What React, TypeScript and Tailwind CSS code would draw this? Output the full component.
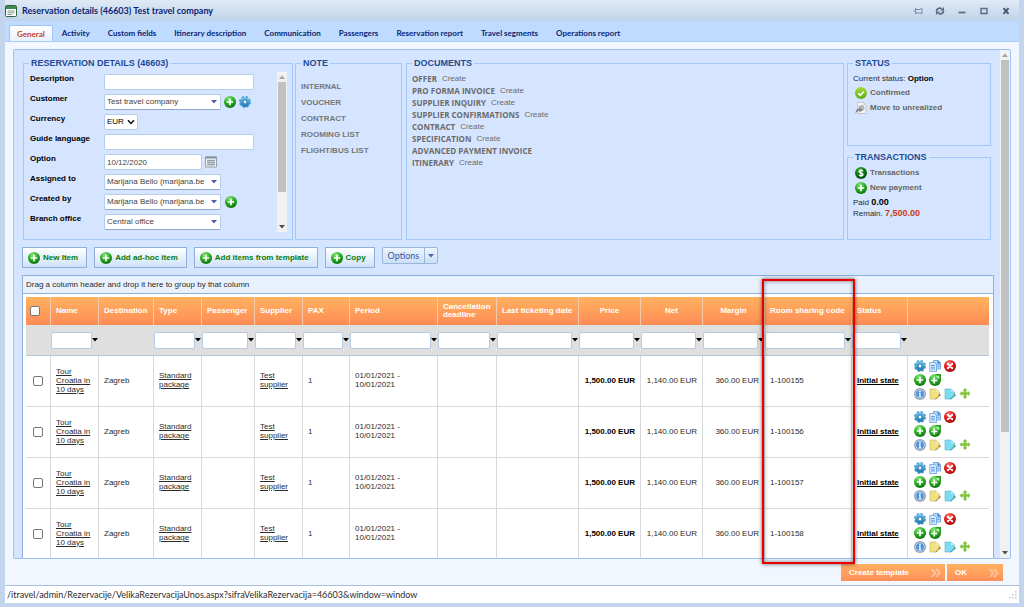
import type { ReactNode } from 'react';

const ARIAL = "font-['Liberation_Sans',Arial,sans-serif]";
const SEGOE = "font-['Open_Sans','Noto_Sans',sans-serif]";
const LATO = "font-['Lato','Open_Sans',sans-serif]";

const tabs = [
  'General',
  'Activity',
  'Custom fields',
  'Itinerary description',
  'Communication',
  'Passengers',
  'Reservation report',
  'Travel segments',
  'Operations report',
];

const notes = ['INTERNAL', 'VOUCHER', 'CONTRACT', 'ROOMING LIST', 'FLIGHT/BUS LIST'];

const documents = [
  { name: 'OFFER', create: true },
  { name: 'PRO FORMA INVOICE', create: true },
  { name: 'SUPPLIER INQUIRY', create: true },
  { name: 'SUPPLIER CONFIRMATIONS', create: true },
  { name: 'CONTRACT', create: true },
  { name: 'SPECIFICATION', create: true },
  { name: 'ADVANCED PAYMENT INVOICE', create: false },
  { name: 'ITINERARY', create: true },
];

const columns = [
  { label: 'Name', col: 'w-[48px]', filter: true, align: 'text-left' },
  { label: 'Destination', col: 'w-[55px]', filter: false, align: 'text-left' },
  { label: 'Type', col: 'w-[48px]', filter: true, align: 'text-left' },
  { label: 'Passenger', col: 'w-[53px]', filter: true, align: 'text-left' },
  { label: 'Supplier', col: 'w-[48px]', filter: true, align: 'text-left' },
  { label: 'PAX', col: 'w-[47px]', filter: true, align: 'text-left' },
  { label: 'Period', col: 'w-[88px]', filter: true, align: 'text-left' },
  { label: 'Cancellation deadline', col: 'w-[59px]', filter: true, align: 'text-left' },
  { label: 'Last ticketing date', col: 'w-[82px]', filter: true, align: 'text-left' },
  { label: 'Price', col: 'w-[62px]', filter: true, align: 'text-center' },
  { label: 'Net', col: 'w-[62px]', filter: true, align: 'text-center' },
  { label: 'Margin', col: 'w-[62px]', filter: true, align: 'text-center' },
  { label: 'Room sharing code', col: 'w-[87px]', filter: true, align: 'text-left' },
  { label: 'Status', col: 'w-[56px]', filter: true, align: 'text-left' },
];

const codes = ['1-100155', '1-100156', '1-100157', '1-100158'];

/* ---------- icons ---------- */

// gradients shared by all icons
function IconDefs() {
  return (
    <svg className="absolute size-0" aria-hidden="true">
      <defs>
        <radialGradient id="green" cx="0.4" cy="0.25" r="0.8">
          <stop offset="0" stopColor="#8be878" />
          <stop offset="0.5" stopColor="#2cae24" />
          <stop offset="1" stopColor="#0a6b0a" />
        </radialGradient>
        <radialGradient id="darkGreen" cx="0.4" cy="0.25" r="0.8">
          <stop offset="0" stopColor="#4fae48" />
          <stop offset="0.5" stopColor="#0b7a12" />
          <stop offset="1" stopColor="#03480a" />
        </radialGradient>
        <radialGradient id="red" cx="0.4" cy="0.25" r="0.8">
          <stop offset="0" stopColor="#f47a70" />
          <stop offset="0.5" stopColor="#dc1c1c" />
          <stop offset="1" stopColor="#a30808" />
        </radialGradient>
        <linearGradient id="blue" x1="0" y1="0" x2="0" y2="1">
          <stop offset="0" stopColor="#7cc6ea" />
          <stop offset="1" stopColor="#1673b0" />
        </linearGradient>
        <linearGradient id="lime" x1="0" y1="0" x2="0" y2="1">
          <stop offset="0" stopColor="#a3dc3a" />
          <stop offset="1" stopColor="#5fae12" />
        </linearGradient>
      </defs>
    </svg>
  );
}

function Icon({ children }: { children: ReactNode }) {
  return (
    <svg viewBox="0 0 24 24" className="size-3 shrink-0" aria-hidden="true">
      {children}
    </svg>
  );
}

const PlusIcon = () => (
  <Icon>
    <circle cx="12" cy="12" r="12" fill="url(#green)" />
    <path d="M12 5.5v13M5.5 12h13" stroke="#fff" strokeWidth="3.4" />
  </Icon>
);

const PlusCornerIcon = () => (
  <Icon>
    <circle cx="12" cy="12" r="12" fill="url(#green)" />
    <path d="M13 0h11v11z" fill="#27a31f" />
    <path d="M10.5 7v12M4.5 13h12" stroke="#fff" strokeWidth="3.2" />
    <path d="M14.5 4.5h5v5M19.5 4.5l-4 4" stroke="#e4ffe0" strokeWidth="1.8" fill="none" />
  </Icon>
);

const GearIcon = () => (
  <Icon>
    <circle cx="12" cy="12" r="10.2" fill="none" stroke="#4a9fd0" strokeWidth="3.6" strokeDasharray="4.8 3.21" />
    <circle cx="12" cy="12" r="9.8" fill="url(#blue)" />
    <circle cx="12" cy="12" r="4.8" fill="#2f84ba" />
    <circle cx="12" cy="12" r="2.8" fill="#f2faff" />
  </Icon>
);

const CopyIcon = () => (
  <Icon>
    <path d="M9 1h10l4 4v13H9z" fill="#b9d8f7" stroke="#5b9be0" strokeWidth="1.5" />
    <path d="M1.5 5H11l4 4v14H1.5z" fill="#dcebfc" stroke="#5b9be0" strokeWidth="1.5" />
    <path d="M4 11h8M4 14.5h8M4 18h8M17 9h4M17 13h4" stroke="#5797df" strokeWidth="1.8" />
    <path d="M17 1v6h6" fill="#2f74c8" />
  </Icon>
);

const DeleteIcon = () => (
  <Icon>
    <circle cx="12" cy="12" r="12" fill="url(#red)" />
    <path d="M7.5 7.5l9 9M16.5 7.5l-9 9" stroke="#fff" strokeWidth="3.6" strokeLinecap="round" />
  </Icon>
);

const InfoIcon = () => (
  <Icon>
    <circle cx="12" cy="12" r="12" fill="#93a3b5" />
    <circle cx="12" cy="12" r="8.8" fill="#4f93dc" stroke="#c3d3e4" strokeWidth="1.8" />
    <path d="M12 10.5v7M10 11h2.5M9.5 17.5h5" stroke="#fff" strokeWidth="2.4" />
    <circle cx="12" cy="7" r="1.9" fill="#fff" />
  </Icon>
);

function NoteIcon({ fill, edge, pencil }: { fill: string; edge: string; pencil: string }) {
  return (
    <Icon>
      <path d="M2 2h12l7 6v8l-7 6H2z" fill={fill} stroke={edge} strokeWidth="1.2" />
      <path d="M14 2v6h7" fill="#fff" fillOpacity="0.4" />
      <path d="M21 14.5L15.5 20" stroke={edge} strokeWidth="3.4" />
      <path d="M22.5 13l-2 2" stroke={pencil} strokeWidth="3.6" />
      <path d="M15 20.5l-2 2" stroke="#555" strokeWidth="2" />
    </Icon>
  );
}

const MoveIcon = () => (
  <Icon>
    <path d="M12 3v16M4 11h16" stroke="#84c441" strokeWidth="5" />
    <path d="M12 0l5 5H7zM12 22l-5-5h10zM1 11l5-5v10zM23 11l-5 5V6z" fill="#84c441" />
  </Icon>
);

const CheckIcon = () => (
  <Icon>
    <circle cx="12" cy="12" r="12" fill="url(#lime)" />
    <path d="M6.5 12.5l4 4 7-7.5" stroke="#fff" strokeWidth="3.4" fill="none" />
  </Icon>
);

const UnrealizedIcon = () => (
  <Icon>
    <path d="M5 1h12l5 5v17H5z" fill="#f4f4f4" stroke="#b4b4b4" strokeWidth="1.3" />
    <path d="M17 1v5h5" fill="#d0d0d0" />
    <circle cx="13" cy="12" r="6" fill="#b5b5b5" />
    <path d="M1 23c0-7 3-10 8-10v-3l6 6-6 5v-3c-3 0-5 1-8 5z" fill="#858585" />
  </Icon>
);

const DollarIcon = () => (
  <Icon>
    <circle cx="12" cy="12" r="12" fill="url(#darkGreen)" />
    <path
      d="M16 8.5c-1-1.5-2.3-2-4-2-2.3 0-3.8 1-3.8 2.7 0 4 8 1.8 8 5.8 0 1.7-1.6 2.7-4.2 2.7-2 0-3.4-.7-4.3-2.2M12 4v16"
      stroke="#fff"
      strokeWidth="2.4"
      fill="none"
    />
  </Icon>
);

const CalendarIcon = () => (
  <Icon>
    <path d="M1 2h22v20H1z" fill="#f3f5f7" stroke="#7d8a97" strokeWidth="1.6" />
    <path d="M1 1h22v4H1z" fill="#8593a1" />
    <path d="M4 9h16M4 13h16M4 17h16M6 7v13M10 7v13M14 7v13M18 7v13" stroke="#76838f" strokeWidth="1.3" />
  </Icon>
);

const FormIcon = () => (
  <Icon>
    <rect x="1" y="1" width="22" height="22" rx="2" fill="#fff" stroke="#2f6340" strokeWidth="2" />
    <path d="M2 2h20v6H2z" fill="#3f8a52" />
    <path d="M5 12h14M5 15.5h14M5 19h9" stroke="#6d9878" strokeWidth="1.8" />
  </Icon>
);

function Caret({ className }: { className: string }) {
  return (
    <svg viewBox="0 0 6 4" className={`h-1 w-1.5 shrink-0 ${className}`} aria-hidden="true">
      <path d="M0 0h6L3 3.5z" fill="currentColor" />
    </svg>
  );
}

const Chevrons = () => (
  <svg viewBox="0 0 20 16" className="h-2 w-2.5 opacity-80" fill="none" stroke="#fff" strokeWidth="1.2" aria-hidden="true">
    <path d="M1 1h3l6 7-6 7H1l6-7zM10 1h3l6 7-6 7h-3l6-7z" />
  </svg>
);

/* ---------- small parts ---------- */

function ScrollBar({ thumb }: { thumb: string }) {
  return (
    <div className="flex w-2.5 shrink-0 flex-col items-center bg-[#f1f1f1]" aria-hidden="true">
      <div className="flex h-2.5 items-center">
        <Caret className="rotate-180 text-[#a3a3a3]" />
      </div>
      <div className="flex w-full flex-1 flex-col items-center">
        <div className={`w-2 bg-[#c1c1c1] ${thumb}`} />
      </div>
      <div className="flex h-2.5 items-center">
        <Caret className="text-[#505050]" />
      </div>
    </div>
  );
}

function Panel({ title, className, children }: { title: string; className: string; children: ReactNode }) {
  return (
    <fieldset className={`min-w-0 border border-[#a3c8fb] px-[5px] ${className}`}>
      <legend className="px-0.5 text-[9px] leading-3 font-bold text-[#1f4b94]">{title}</legend>
      {children}
    </fieldset>
  );
}

function Field({ id, label, children }: { id: string; label: string; children: ReactNode }) {
  return (
    <div className="flex h-5 items-start">
      <label htmlFor={id} className="w-[74px] shrink-0 pt-0.5 leading-[10px] font-bold text-black">
        {label}
      </label>
      <div className="flex items-center pt-0.5">{children}</div>
    </div>
  );
}

const box = 'h-4 rounded-xs border border-[#b4cdec] bg-white px-0.5 text-[#444]';

function Combo({ id, value }: { id: string; value: string }) {
  return (
    <div className="relative flex items-center">
      <select id={id} className={`${box} w-[117px] appearance-none border-b-[#8fa9d3] pr-3`}>
        <option>{value}</option>
      </select>
      <Caret className="pointer-events-none absolute right-1 text-[#4a5fae]" />
    </div>
  );
}

function IconButton({ label, children }: { label: string; children: ReactNode }) {
  return (
    <button type="button" aria-label={label} className="block">
      {children}
    </button>
  );
}

function ToolButton({ children }: { children: ReactNode }) {
  return (
    <button
      type="button"
      className="flex h-[21px] items-center gap-[3px] border border-[#8fb0dd] bg-linear-to-b from-white to-[#cfe2fa] pr-2 pl-[5px] font-bold text-[#0a7a0a]"
    >
      <PlusIcon />
      {children}
    </button>
  );
}

function ActionLink({ icon, children }: { icon: ReactNode; children: ReactNode }) {
  return (
    <a href="#" className="flex h-[15px] items-center gap-[3px] pl-0.5 font-bold text-[#666]">
      {icon}
      {children}
    </a>
  );
}

/* ---------- sections ---------- */

function TitleBar() {
  return (
    <header className="flex h-[21px] shrink-0 items-center justify-between bg-linear-to-b from-[#dfeaf6] to-[#c1d3ea] pt-px pr-2">
      <h1 className={`flex items-center gap-[5px] text-[9px] font-bold text-[#0a1f75] ${LATO}`}>
        <FormIcon />
        Reservation details (46603) Test travel company
      </h1>
      <div className="flex items-center gap-3 text-[#5b6c85]">
        <IconButton label="Pin">
          <svg viewBox="0 0 10 10" className="size-2.5" fill="none" stroke="currentColor">
            <path d="M0 5h2" opacity="0.5" />
            <path d="M2.5 2v6M9 2.5v5M2.5 3.5h4l2.5-1M2.5 7h4l2.5.5" opacity="0.7" />
          </svg>
        </IconButton>
        <IconButton label="Reload">
          <svg viewBox="0 0 10 10" className="size-2.5" fill="none" stroke="currentColor" strokeWidth="1.8">
            <path d="M1.5 5.5a3.2 3.2 0 0 1 5-2.8M8.5 4.5a3.2 3.2 0 0 1-5 2.8" />
            <path d="M5 4.5h4V1zM5 5.5H1V9z" fill="currentColor" stroke="none" />
          </svg>
        </IconButton>
        <IconButton label="Minimize">
          <svg viewBox="0 0 10 10" className="size-2.5" stroke="currentColor" strokeWidth="1.8">
            <path d="M1.5 6.5h7" />
          </svg>
        </IconButton>
        <IconButton label="Maximize">
          <svg viewBox="0 0 10 10" className="size-2.5" fill="none" stroke="currentColor" strokeWidth="1.4">
            <path d="M2 2.5h6v5H2z" />
          </svg>
        </IconButton>
        <IconButton label="Close">
          <svg viewBox="0 0 10 10" className="size-2.5" stroke="#44536b" strokeWidth="1.8">
            <path d="M2.5 2.2l5 5.6M7.5 2.2l-5 5.6" />
          </svg>
        </IconButton>
      </div>
    </header>
  );
}

function Tabs() {
  return (
    <nav className="flex h-[21px] shrink-0 items-end border-b border-[#a9cdfb] bg-[#bfdbff] pl-1">
      {tabs.map((tab, i) => (
        <a
          key={tab}
          href="#"
          className={`flex h-4 items-center text-[8px] font-bold ${LATO} ${
            i === 0
              ? 'rounded-t-xs border border-b-0 border-[#9fc3f3] bg-linear-to-b from-white to-[#e9f1fd] px-[7px] text-[#c8441b]'
              : 'px-[9px] text-[#0a1f75]'
          }`}
        >
          {tab}
        </a>
      ))}
    </nav>
  );
}

function Details() {
  return (
    <Panel title="RESERVATION DETAILS (46603)" className="w-[270px] shrink-0">
      <div className="flex justify-between pt-[3px] pb-[7px] pl-px">
        <div>
          <Field id="description" label="Description">
            <input id="description" className={`${box} w-[150px]`} />
          </Field>
          <Field id="customer" label="Customer">
            <Combo id="customer" value="Test travel company" />
            <span className="flex gap-[3px] pl-[3px]">
              <IconButton label="Add customer">
                <PlusIcon />
              </IconButton>
              <IconButton label="Edit customer">
                <GearIcon />
              </IconButton>
            </span>
          </Field>
          <Field id="currency" label="Currency">
            <div className="relative flex items-center">
              <select id="currency" className={`${box} w-[34px] appearance-none text-black`}>
                <option>EUR</option>
              </select>
              <svg
                viewBox="0 0 8 6"
                className="pointer-events-none absolute right-[3px] h-1.5 w-2"
                fill="none"
                stroke="#111"
                strokeWidth="1.5"
                aria-hidden="true"
              >
                <path d="M1 1.2l3 3.2 3-3.2" />
              </svg>
            </div>
          </Field>
          <Field id="language" label="Guide language">
            <input id="language" className={`${box} w-[150px]`} />
          </Field>
          <Field id="option" label="Option">
            <input id="option" defaultValue="10/12/2020" className={`${box} w-[98px]`} />
            <span className="pl-[3px]">
              <IconButton label="Open calendar">
                <CalendarIcon />
              </IconButton>
            </span>
          </Field>
          <Field id="assigned" label="Assigned to">
            <Combo id="assigned" value="Marijana Bello (marijana.be" />
          </Field>
          <Field id="created" label="Created by">
            <Combo id="created" value="Marijana Bello (marijana.be" />
            <span className="pl-1">
              <IconButton label="Add user">
                <PlusIcon />
              </IconButton>
            </span>
          </Field>
          <Field id="branch" label="Branch office">
            <Combo id="branch" value="Central office" />
          </Field>
        </div>
        <ScrollBar thumb="h-[110px]" />
      </div>
    </Panel>
  );
}

function Overview() {
  return (
    <div className="flex pt-[7px] pr-[3px] pl-px">
      <Details />
      <Panel title="NOTE" className="ml-0.5 w-[107px] shrink-0">
        <ul className="pt-2.5 leading-4 font-bold text-[#777]">
          {notes.map((n) => (
            <li key={n}>
              <a href="#">{n}</a>
            </li>
          ))}
        </ul>
      </Panel>
      <Panel title="DOCUMENTS" className="ml-1 flex-1">
        <ul className="pt-1 leading-3 text-[#6b6b6b]">
          {documents.map((d) => (
            <li key={d.name} className="flex gap-[5px]">
              <a href="#" className={`font-bold ${SEGOE}`}>
                {d.name}
              </a>
              {d.create && <a href="#">Create</a>}
            </li>
          ))}
        </ul>
      </Panel>
      <div className="ml-[3px] flex w-[144px] shrink-0 flex-col gap-[5px]">
        <Panel title="STATUS" className="flex-1">
          <p className="pt-1 leading-3">
            Current status: <b className="text-black">Option</b>
          </p>
          <ActionLink icon={<CheckIcon />}>Confirmed</ActionLink>
          <ActionLink icon={<UnrealizedIcon />}>Move to unrealized</ActionLink>
        </Panel>
        <Panel title="TRANSACTIONS" className="flex-1">
          <div className="pt-0.5">
            <ActionLink icon={<DollarIcon />}>Transactions</ActionLink>
            <ActionLink icon={<PlusIcon />}>New payment</ActionLink>
          </div>
          <p className="pt-0.5 leading-[10px]">
            Paid <b className="text-[9px] text-black">0.00</b>
          </p>
          <p className="leading-[10px]">
            Remain. <b className="text-[9px] text-[#cc3a14]">7,500.00</b>
          </p>
        </Panel>
      </div>
    </div>
  );
}

function Toolbar() {
  return (
    <div className="mt-[7px] flex items-start gap-[7px]">
      <ToolButton>New Item</ToolButton>
      <ToolButton>Add ad-hoc item</ToolButton>
      <ToolButton>Add items from template</ToolButton>
      <ToolButton>Copy</ToolButton>
      <button
        type="button"
        className={`flex h-[17px] items-center rounded-xs border border-[#9bb6dc] bg-linear-to-b from-[#eef5fe] to-[#cbdff7] text-[9px] text-[#44539b] ${LATO}`}
      >
        <span className="px-[5px]">Options</span>
        <span className="flex h-full items-center border-l border-[#9bb6dc] px-[3px]">
          <Caret className="text-[#4f63a8]" />
        </span>
      </button>
    </div>
  );
}

function RowActions() {
  return (
    <div className="flex flex-col gap-0.5">
      <div className="flex gap-[3px]">
        <IconButton label="Edit">
          <GearIcon />
        </IconButton>
        <IconButton label="Copy">
          <CopyIcon />
        </IconButton>
        <IconButton label="Delete">
          <DeleteIcon />
        </IconButton>
      </div>
      <div className="flex gap-[3px]">
        <IconButton label="Add">
          <PlusIcon />
        </IconButton>
        <IconButton label="Add linked">
          <PlusCornerIcon />
        </IconButton>
      </div>
      <div className="flex gap-[3px]">
        <IconButton label="Info">
          <InfoIcon />
        </IconButton>
        <IconButton label="Note">
          <NoteIcon fill="#f0e283" edge="#cbb755" pencil="#c0504d" />
        </IconButton>
        <IconButton label="Voucher note">
          <NoteIcon fill="#7fdcf0" edge="#4db4cf" pencil="#3f8f5a" />
        </IconButton>
        <IconButton label="Move">
          <MoveIcon />
        </IconButton>
      </div>
    </div>
  );
}

const cell = 'border-r border-b border-[#d9d9d9] px-[5px] pb-0.5';
const check = 'block size-2.5 appearance-none rounded-xs border border-[#767676] bg-white';

function ItemsGrid() {
  return (
    <div className="mt-[7px] min-h-0 flex-1 overflow-hidden border border-b-0 border-[#8fb0dd] bg-white">
      <p className="h-[18px] border-b border-[#8fb0dd] bg-[#e9f1fc] px-[3px] leading-[17px]">
        Drag a column header and drop it here to group by that column
      </p>
      <div className="pt-[3px] pr-1 pl-[3px]">
        <table className="w-full table-fixed border-separate border-spacing-0 leading-[9px]">
          <colgroup>
            <col className="w-[25px]" />
            {columns.map((c) => (
              <col key={c.label} className={c.col} />
            ))}
            <col />
          </colgroup>
          <thead>
            <tr className="h-7 bg-linear-to-b from-[#ffb25e] to-[#ff8b57] text-white">
              <th className="border-r border-[#f3c9a8] pl-1">
                <input type="checkbox" aria-label="Select all" className={check} />
              </th>
              {columns.map((c) => (
                <th key={c.label} className={`border-r border-[#f3c9a8] px-[5px] leading-2 ${c.align}`}>
                  {c.label}
                </th>
              ))}
              <th />
            </tr>
            <tr className="h-[31px] bg-[#dfdfdf]">
              <td className="border-b border-[#b9c8da]" />
              {columns.map((c) => (
                <td key={c.label} className="border-b border-[#b9c8da]">
                  {c.filter && (
                    <div className="flex items-center">
                      <input
                        aria-label={`Filter ${c.label}`}
                        className="h-[17px] min-w-0 flex-1 rounded-xs border border-[#b4cbe6] bg-white"
                      />
                      <button type="button" aria-label={`${c.label} filter options`} className="pr-px">
                        <Caret className="text-black" />
                      </button>
                    </div>
                  )}
                </td>
              ))}
              <td className="border-b border-[#b9c8da]" />
            </tr>
          </thead>
          <tbody>
            {codes.map((code) => (
              <tr key={code} className="h-[51px]">
                <td className="border-r border-b border-[#d9d9d9] pb-px pl-[7px]">
                  <input type="checkbox" aria-label={`Select ${code}`} className={check} />
                </td>
                <td className={cell}>
                  <a href="#" className="underline">
                    Tour Croatia in 10 days
                  </a>
                </td>
                <td className={cell}>Zagreb</td>
                <td className={cell}>
                  <a href="#" className="underline">
                    Standard package
                  </a>
                </td>
                <td className={cell} />
                <td className={cell}>
                  <a href="#" className="underline">
                    Test supplier
                  </a>
                </td>
                <td className={cell}>1</td>
                <td className={cell}>
                  01/01/2021 -<br />
                  10/01/2021
                </td>
                <td className={cell} />
                <td className={cell} />
                <td className={`${cell} text-right font-bold whitespace-nowrap text-black`}>1,500.00 EUR</td>
                <td className={`${cell} text-right whitespace-nowrap`}>1,140.00 EUR</td>
                <td className={`${cell} text-right whitespace-nowrap`}>360.00 EUR</td>
                <td className={cell}>{code}</td>
                <td className={`${cell} whitespace-nowrap`}>
                  <a href="#" className="font-bold text-black underline">
                    Initial state
                  </a>
                </td>
                <td className="border-b border-[#d9d9d9] pb-0.5 pl-1.5">
                  <RowActions />
                </td>
              </tr>
            ))}
          </tbody>
        </table>
      </div>
    </div>
  );
}

function FooterButton({ className, children }: { className: string; children: ReactNode }) {
  return (
    <button
      type="button"
      className={`flex h-[17px] items-center justify-between bg-linear-to-b from-[#ffb061] to-[#ff8f5a] pr-1 pl-2 font-bold text-white ${className}`}
    >
      {children}
      <Chevrons />
    </button>
  );
}

export default function App() {
  return (
    <div
      className={`relative flex h-screen flex-col overflow-hidden bg-[#c3d5ec] px-[5px] pb-1 text-[8px] text-[#2b2b2b] ${ARIAL}`}
    >
      <IconDefs />
      <TitleBar />
      <Tabs />
      <main className="flex min-h-0 flex-1 flex-col bg-[#f1f6ff] px-2 pt-[7px]">
        <div className="flex min-h-0 flex-1 overflow-hidden rounded-xs border border-[#9cc4fb] bg-[#d5e5ff]">
          <div className="flex min-w-0 flex-1 flex-col pr-1.5 pl-2">
            <Overview />
            <Toolbar />
            <ItemsGrid />
          </div>
          <ScrollBar thumb="h-[372px]" />
        </div>
        <div className="flex shrink-0 justify-end gap-0.5 pt-[5px] pr-2 pb-1">
          <FooterButton className="w-[104px]">Create template</FooterButton>
          <FooterButton className="w-[56px]">OK</FooterButton>
        </div>
      </main>
      <footer
        className={`flex h-[18px] shrink-0 items-center justify-between border-t border-[#a9bfdd] bg-white px-0.5 text-[9px] ${LATO}`}
      >
        /itravel/admin/Rezervacije/VelikaRezervacijaUnos.aspx?sifraVelikaRezervacija=46603&window=window
        <svg viewBox="0 0 8 8" className="size-2" fill="#c2c8d0" aria-hidden="true">
          <path d="M6 0h1.5v1.5H6zM3 3h1.5v1.5H3zM6 3h1.5v1.5H6zM0 6h1.5v1.5H0zM3 6h1.5v1.5H3zM6 6h1.5v1.5H6z" />
        </svg>
      </footer>
      {/* highlight over the room sharing column */}
      <div className="pointer-events-none absolute top-[279px] left-[762px] h-[285px] w-[93px] border-2 border-[#e60000] shadow-[0_0_4px_rgba(0,0,0,0.6),inset_0_0_4px_rgba(0,0,0,0.5)]" />
    </div>
  );
}
